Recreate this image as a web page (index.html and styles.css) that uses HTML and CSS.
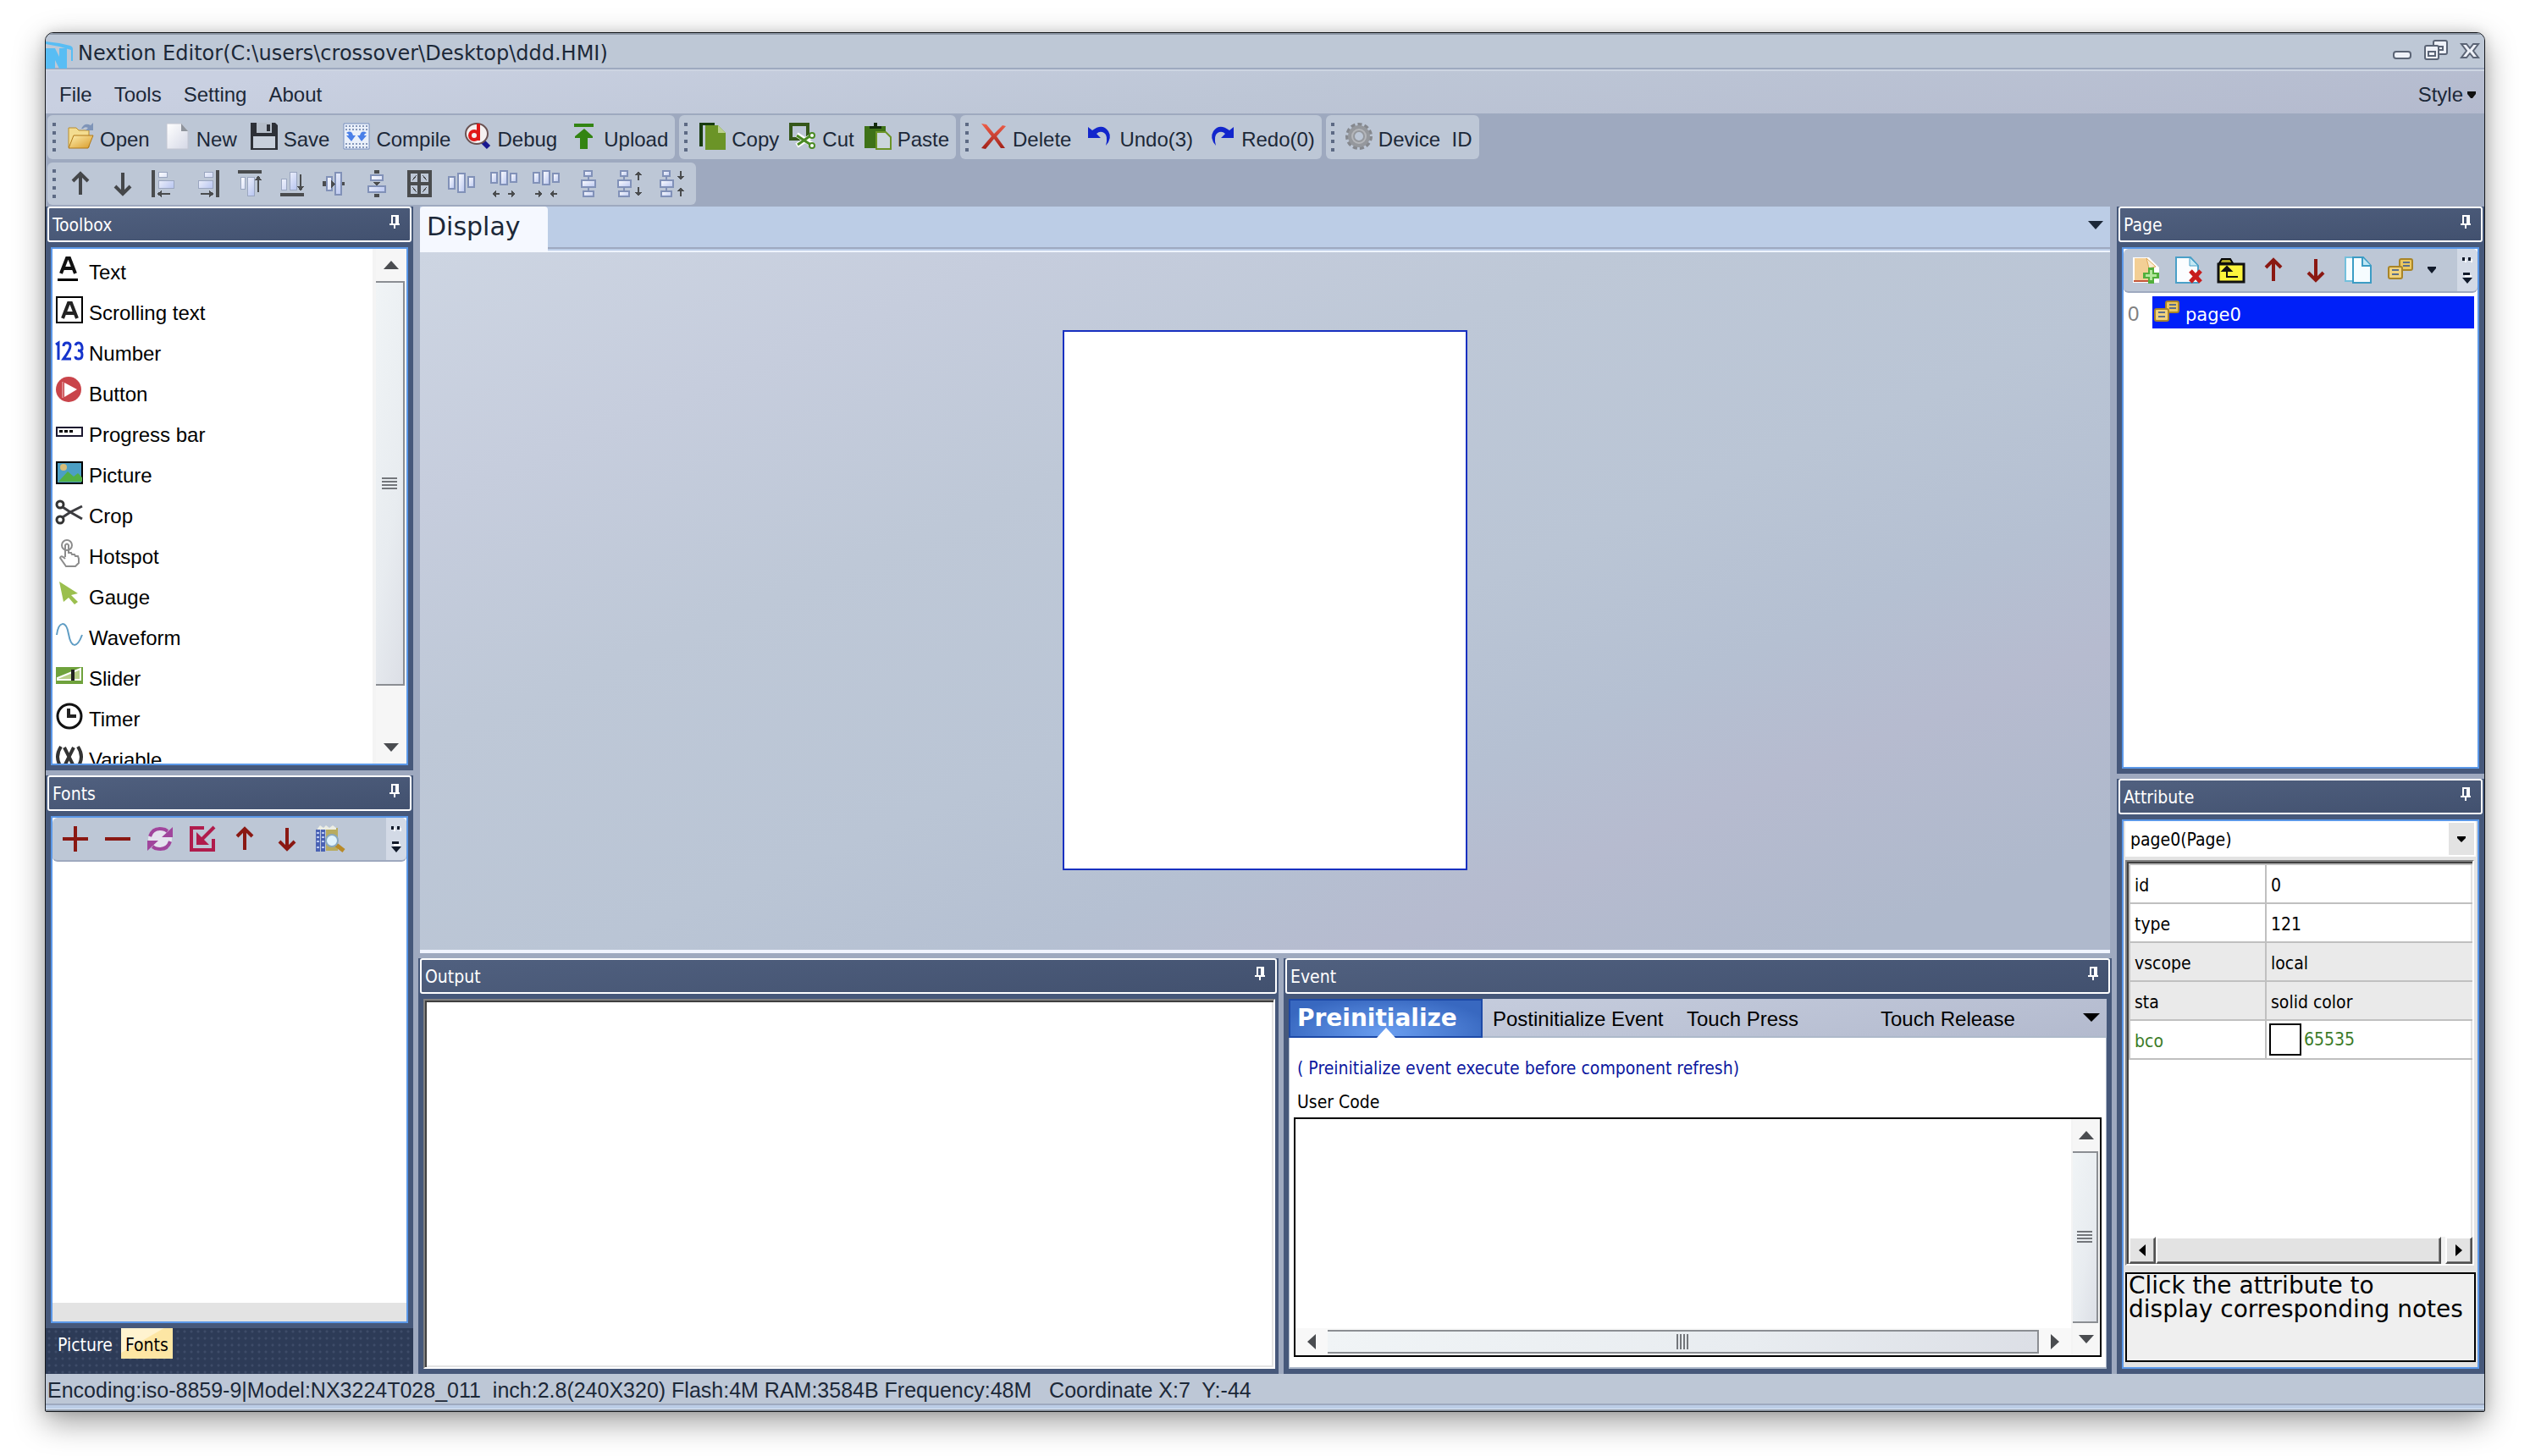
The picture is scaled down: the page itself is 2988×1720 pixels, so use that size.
FILE: index.html
```html
<!DOCTYPE html>
<html lang="en">
<head>
<meta charset="utf-8">
<title>Nextion Editor</title>
<link rel="stylesheet" href="styles.css">
</head>
<body>
<svg class="sprite" aria-hidden="true">
  <defs>
    <linearGradient id="gFolder" x1="0" y1="0" x2="1" y2="1"><stop offset="0" stop-color="#fff0b0"/><stop offset="1" stop-color="#d89a28"/></linearGradient>
    <linearGradient id="gPaper" x1="0" y1="0" x2="1" y2="1"><stop offset="0" stop-color="#fff"/><stop offset="1" stop-color="#d5d8e6"/></linearGradient>
    <linearGradient id="gBar" x1="0" y1="0" x2="1" y2="1"><stop offset="0" stop-color="#fff"/><stop offset="1" stop-color="#b9c6f0"/></linearGradient>
    <linearGradient id="gRed" x1="0" y1="0" x2="0" y2="1"><stop offset="0" stop-color="#f0604a"/><stop offset="1" stop-color="#a02018"/></linearGradient>
  </defs>
  <symbol id="pin" viewBox="0 0 12 16"><path d="M2 0h9v10h1v2H7v4H5v-4H0v-2h2zM4 2v8h3V2z" fill="#fff" fill-rule="evenodd"/></symbol>
  <symbol id="up" viewBox="0 0 32 32"><path d="M16 29V5M7 13l9-9 9 9" fill="none" stroke="currentColor" stroke-width="4"/></symbol>
  <symbol id="down" viewBox="0 0 32 32"><path d="M16 3v24M7 19l9 9 9-9" fill="none" stroke="currentColor" stroke-width="4"/></symbol>
  <symbol id="cards" viewBox="0 0 32 32"><g stroke="#a88428" stroke-width="2"><rect x="15" y="3" width="15" height="13" rx="2" fill="#ecc860"/><rect x="2" y="12" width="16" height="14" rx="2" fill="#f0d27c"/></g><path d="M6 16h8M6 21h8M19 7h8M19 11h8" stroke="#5c6f8c" stroke-width="2"/></symbol>
  <symbol id="overflow" viewBox="0 0 14 32"><path d="M1 1h3v4H1zM8 1h3v4H8zM2 19h8v3H2z" fill="#111a2a"/><path d="M1 25h12l-6 7z" fill="#111a2a"/><path d="M4 3h2v4H4zM11 3h2v4h-2zM4 22h8v2H4z" fill="#fff"/></symbol>
  <symbol id="vh" viewBox="0 0 32 32"><g fill="url(#gBar)" stroke="#8191b8" stroke-width="2"><rect x="1" y="8" width="7" height="14"/><rect x="12" y="4" width="8" height="22"/><rect x="24" y="8" width="7" height="12"/></g></symbol>
  <symbol id="vhs" viewBox="0 0 32 32"><g fill="url(#gBar)" stroke="#8191b8" stroke-width="2"><rect x="1" y="3" width="7" height="12"/><rect x="12" y="1" width="8" height="16"/><rect x="24" y="4" width="7" height="10"/></g></symbol>
  <symbol id="vv" viewBox="0 0 32 32"><path d="M16 0v32" stroke="#8191b8" stroke-width="2"/><g fill="url(#gBar)" stroke="#8191b8" stroke-width="2"><rect x="11" y="1" width="9" height="6"/><rect x="8" y="12" width="16" height="8"/><rect x="10" y="25" width="12" height="6"/></g></symbol>
  <symbol id="vvs" viewBox="0 0 32 32"><path d="M8 0v32" stroke="#8191b8" stroke-width="2"/><g fill="url(#gBar)" stroke="#8191b8" stroke-width="2"><rect x="4" y="1" width="8" height="6"/><rect x="1" y="12" width="15" height="8"/><rect x="2" y="25" width="12" height="6"/></g></symbol>
</svg>

<main class="window">
  <header class="titlebar">
    <svg class="ico" viewBox="0 0 32 32"><path d="M0 0l16 2 13 3q3 1 3 4v14h-2V10l-14-4L0 3z" fill="#58bdf4"/><path d="M0 8h11l5 10V8h9v24h-9l-5-10v10H0z" fill="#58bdf4"/></svg>
    <h1>Nextion Editor(C:\users\crossover\Desktop\ddd.HMI)</h1>
    <div class="winctl">
      <button aria-label="Minimize"><svg width="24" height="30" viewBox="0 0 24 30"><rect x="2" y="17" width="20" height="8" rx="3" fill="#eef1f8" stroke="#5b6475" stroke-width="2"/></svg></button>
      <button aria-label="Restore"><svg width="30" height="30" viewBox="0 0 30 30"><g fill="#eef1f8" stroke="#5b6475" stroke-width="2"><rect x="12" y="4" width="16" height="16" rx="2"/><rect x="18" y="11" width="5" height="4"/><rect x="2" y="10" width="16" height="16" rx="2"/><rect x="6" y="17" width="8" height="5"/></g></svg></button>
      <button aria-label="Close"><svg width="24" height="30" viewBox="0 0 24 30"><path d="M2 8h6l4 5 4-5h6l-6 8 6 8h-6l-4-5-4 5H2l6-8z" fill="#eef1f8" stroke="#5b6475" stroke-width="2"/></svg></button>
    </div>
  </header>

  <nav class="menubar">
    <button>File</button><button>Tools</button><button>Setting</button><button>About</button>
    <button class="style">Style<svg width="10" height="8" viewBox="0 0 10 8"><path d="M0 0h10v3L6 8H4L0 3z" fill="#111"/></svg></button>
  </nav>

  <div class="toolbars">
    <div class="row">
      <div class="group">
        <i class="grip"></i>
        <button><svg class="ico" viewBox="0 0 32 32"><path d="M2 6h9l3 3h12v20H2z" fill="#f3dc90" stroke="#b98c2c"/><path d="M8 15h23l-6 15H2z" fill="url(#gFolder)" stroke="#b07818"/><path d="M17 7q4-8 11-4l3-3v9h-9l3-3q-4-2-6 1z" fill="#7e94b8"/></svg>Open</button>
        <button><svg class="ico" viewBox="0 0 32 32"><path d="M4 1h17l8 9v21H4z" fill="url(#gPaper)" stroke="#c3c6d2"/><path d="M21 1l8 9h-8z" fill="#8f949c"/></svg>New</button>
        <button><svg class="ico" viewBox="0 0 32 32"><path d="M0 0h29l3 3v29H0z" fill="#2e3138"/><path d="M7 0h18v12H7z" fill="#b7bfcb"/><path d="M19 2h4v8h-4z" fill="#2e3138"/><path d="M3 16h26v14H3z" fill="#c8d0dc"/></svg>Save</button>
        <button><svg class="ico" viewBox="0 0 32 32"><path d="M1 1h30v30H1z" fill="#eaf0fa" stroke="#7890c0"/><path d="M3 4h26M3 8h26M3 25h26M3 29h26" stroke="#8597ba" stroke-width="2" stroke-dasharray="2 2"/><path d="M4 12q6-4 8 3h3l-5 7-6-7h3q0-2-3-3zM28 12q-6-4-8 3h-3l5 7 6-7h-3q0-2 3-3z" fill="#4a7fe8"/></svg>Compile</button>
        <button><svg class="ico" viewBox="0 0 32 32"><path d="M20 20l9 9" stroke="#181890" stroke-width="6"/><ellipse cx="15" cy="13" rx="13" ry="12" fill="#f4f0f0" stroke="#6a5252" stroke-width="2"/><path d="M17 1v20" stroke="#e01818" stroke-width="4"/><ellipse cx="12" cy="15" rx="5" ry="5" fill="none" stroke="#e01818" stroke-width="4"/></svg>Debug</button>
        <button><svg class="ico" viewBox="0 0 32 32"><path d="M4 1h23v4H4zM16 7l10 9v2h-6v13h-9V18H5v-2z" fill="#338413"/></svg>Upload</button>
      </div>
      <div class="group tight">
        <i class="grip"></i>
        <button><svg class="ico" viewBox="0 0 32 32"><path d="M1 0h18v3H5v25H1z" fill="#183c10"/><path d="M8 3h15l9 9v20H8z" fill="#6b9427"/><path d="M23 3l9 9h-9z" fill="#b9d08c"/></svg>Copy</button>
        <button><svg class="ico" viewBox="0 0 32 32"><path d="M2 2h20v17H2z" fill="none" stroke="#35571a" stroke-width="4"/><path d="M9 14l20 13M9 27l20-13" stroke="#fff" stroke-width="6"/><path d="M9 15l18 12M10 26l17-12" stroke="#4a8a24" stroke-width="3"/><circle cx="27" cy="15" r="3" fill="#fff" stroke="#4a8a24" stroke-width="2"/><circle cx="27" cy="27" r="3" fill="#fff" stroke="#4a8a24" stroke-width="2"/></svg>Cut</button>
        <button><svg class="ico" viewBox="0 0 32 32"><path d="M0 4h25v26H0z" fill="#3e7218"/><path d="M6 7h14V4h-5V0h-4v4H6z" fill="#132c0c"/><path d="M14 11h11l6 6v14H14z" fill="#cbd5dd" stroke="#6b9427" stroke-width="2"/></svg>Paste</button>
      </div>
      <div class="group wide">
        <i class="grip"></i>
        <button><svg class="ico" viewBox="0 0 32 32"><path d="M2 1l6 1 9 11L27 3l4 1-11 12 10 14h-5l-8-11-10 12-5-1 12-14z" fill="url(#gRed)"/></svg>Delete</button>
        <button><svg class="ico" viewBox="0 0 32 32"><path d="M2 5l5 4q12-9 19 1 5 8-3 17 3-12-2-15-5-3-9 1l5 5H2z" fill="#1226cc"/></svg>Undo(3)</button>
        <button><svg class="ico" viewBox="0 0 32 32"><path d="M30 5l-5 4Q13 0 6 10q-5 8 3 17-3-12 2-15 5-3 9 1l-5 5h15z" fill="#1226cc"/></svg>Redo(0)</button>
      </div>
      <div class="group">
        <i class="grip"></i>
        <button><svg class="ico" viewBox="0 0 32 32"><circle cx="16" cy="16" r="14" fill="none" stroke="#85888e" stroke-width="4" stroke-dasharray="5 3"/><circle cx="16" cy="16" r="9" fill="none" stroke="#95989d" stroke-width="8"/><circle cx="16" cy="16" r="8" fill="none" stroke="#b4b6ba" stroke-width="2"/></svg><span class="pre">Device  ID</span></button>
      </div>
    </div>
    <div class="row">
      <div class="group icons">
        <i class="grip"></i>
        <button aria-label="Bring forward"><svg class="ico dark"><use href="#up"/></svg></button>
        <button aria-label="Send back"><svg class="ico dark"><use href="#down"/></svg></button>
        <button aria-label="Align left"><svg class="ico px" viewBox="0 0 32 32"><path d="M0 0h4v32H0z" fill="#4a4c4e"/><path d="M8 2h10v6H8zM8 12h18v9H8z" fill="url(#gBar)" stroke="#9aa6c0"/><path d="M6 28l6-4v3h10v2H12v3z" fill="#4a4c4e"/></svg></button>
        <button aria-label="Align right"><svg class="ico px" viewBox="0 0 32 32"><path d="M26 0h4v32h-4z" fill="#4a4c4e"/><path d="M12 2h10v6H12zM5 12h17v9H5z" fill="url(#gBar)" stroke="#9aa6c0"/><path d="M24 28l-6-4v3H8v2h10v3z" fill="#4a4c4e"/></svg></button>
        <button aria-label="Align top"><svg class="ico px" viewBox="0 0 32 32"><path d="M2 0h28v4H2z" fill="#4a4c4e"/><path d="M5 8h5v14H5zM13 8h8v22h-8z" fill="url(#gBar)" stroke="#9aa6c0"/><path d="M26 6l4 6h-3v14h-2V12h-3z" fill="#4a4c4e"/></svg></button>
        <button aria-label="Align bottom"><svg class="ico px" viewBox="0 0 32 32"><path d="M2 27h28v4H2z" fill="#4a4c4e"/><path d="M3 10h6v13H3zM13 2h8v21h-8z" fill="url(#gBar)" stroke="#9aa6c0"/><path d="M26 25l4-6h-3V5h-2v14h-3z" fill="#4a4c4e"/></svg></button>
        <button aria-label="Center vertically"><svg class="ico px" viewBox="0 0 32 32"><path d="M2 13h4v6H2zM24 14h4v4h-4z" fill="#4a4c4e"/><path d="M7 8h6v16H7zM17 3h7v26h-7z" fill="url(#gBar)" stroke="#8191b8" stroke-width="2"/><path d="M12 12l5 4-5 5z" fill="#4a4c4e"/></svg></button>
        <button aria-label="Center horizontally"><svg class="ico px" viewBox="0 0 32 32"><path d="M13 0h6v4h-6zM13 28h6v4h-6zM11 14h10l-5 4z" fill="#4a4c4e"/><path d="M9 6h14v6H9zM6 19h20v7H6z" fill="url(#gBar)" stroke="#8191b8" stroke-width="2"/></svg></button>
        <button aria-label="Same size"><svg class="ico px" viewBox="0 0 32 32"><path d="M4 2h25v28H4zM16 2v28M4 16h25" fill="none" stroke="#4a4c4e" stroke-width="4"/><path d="M8 12l5-6M20 6l5 6M8 20l5 6M20 26l5-6" stroke="#4a4c4e"/></svg></button>
        <button aria-label="Equal horizontal space"><svg class="ico px"><use href="#vh"/></svg></button>
        <button aria-label="Increase horizontal space"><svg class="ico px" viewBox="0 0 32 32"><use href="#vhs" width="32" height="32"/><path d="M2 28l5-4v3h4v2H7v3zM30 28l-5-4v3h-4v2h4v3z" fill="#4a4c4e"/></svg></button>
        <button aria-label="Decrease horizontal space"><svg class="ico px" viewBox="0 0 32 32"><use href="#vhs" width="32" height="32"/><path d="M12 28l-5-4v3H3v2h4v3zM20 28l5-4v3h4v2h-4v3z" fill="#4a4c4e"/></svg></button>
        <button aria-label="Equal vertical space"><svg class="ico px"><use href="#vv"/></svg></button>
        <button aria-label="Increase vertical space"><svg class="ico px" viewBox="0 0 32 32"><use href="#vvs" width="32" height="32"/><path d="M25 1l4 5h-3v6h-2V6h-3zM25 31l4-5h-3v-6h-2v6h-3z" fill="#4a4c4e"/></svg></button>
        <button aria-label="Decrease vertical space"><svg class="ico px" viewBox="0 0 32 32"><use href="#vvs" width="32" height="32"/><path d="M25 12l4-5h-3V1h-2v6h-3zM25 20l4 5h-3v6h-2v-6h-3z" fill="#4a4c4e"/></svg></button>
      </div>
    </div>
  </div>

  <div class="workspace">
    <aside class="col left">
      <section class="panel">
        <header class="head"><h2>Toolbox</h2><button aria-label="Pin Toolbox"><svg class="pinico"><use href="#pin"/></svg></button></header>
        <div class="body toolbox">
          <ul>
            <li><button><svg class="ico" viewBox="0 0 32 32"><path d="M6 21l7-18h3l7 18M9 15h11" fill="none" stroke="#111" stroke-width="4"/><path d="M2 27h24v3H2z"/></svg>Text</button></li>
            <li><button><svg class="ico" viewBox="0 0 32 32"><path d="M1 1h30v30H1z" fill="#fff" stroke="#000" stroke-width="2"/><path d="M8 26l7-18h3l7 18M11 20h11" fill="none" stroke="#222" stroke-width="4"/></svg>Scrolling text</button></li>
            <li><button><svg class="ico" viewBox="0 0 32 32"><path d="M0 9l3-2v20M9 11q0-4 4-4t4 4-8 15h9M23 10q1-3 4-3t4 5-5 4q5 0 5 5t-4 5-4-3" fill="none" stroke="#1534cc" stroke-width="3"/></svg>Number</button></li>
            <li><button><svg class="ico" viewBox="0 0 32 32"><circle cx="15" cy="14" r="15" fill="#c9444a"/><path d="M10 6l15 8-15 9z" fill="#fff"/><path d="M8 5v19" stroke="#f0c4c6" stroke-width="1"/></svg>Button</button></li>
            <li><button><svg class="ico" viewBox="0 0 32 32"><path d="M1 11h30v10H1z" fill="#fff" stroke="#1c1830" stroke-width="2"/><path d="M4 14h4v3H4zM10 14h4v3h-4zM16 14h4v3h-4z"/></svg>Progress bar</button></li>
            <li><button><svg class="ico" viewBox="0 0 32 32"><path d="M1 4h30v25H1z" fill="#4c9fc4" stroke="#000" stroke-width="2"/><circle cx="9" cy="10" r="4" fill="#d8bd78"/><path d="M3 27l11-12 7 6 5-4 5 5v5z" fill="#52b043"/></svg>Picture</button></li>
            <li><button><svg class="ico" viewBox="0 0 32 32"><circle cx="5" cy="6" r="4" fill="none" stroke="#333" stroke-width="3"/><circle cx="5" cy="24" r="4" fill="none" stroke="#333" stroke-width="3"/><path d="M8 9l9 6 14 8M8 21l9-6 14-7" fill="none" stroke="#3c3c40" stroke-width="3"/></svg>Crop</button></li>
            <li><button><svg class="ico" viewBox="0 0 32 32"><g fill="none" stroke="#8c8c8c" stroke-width="2"><circle cx="13" cy="6" r="6"/><path d="M11 20V6q2-3 4 0v9h3l1 2h3l1 2h3l1 3v5l-4 4H12l-7-10q1-4 6 1"/></g></svg>Hotspot</button></li>
            <li><button><svg class="ico" viewBox="0 0 32 32"><path d="M4 1l22 14-8 2 8 8-4 3-7-8-6 5z" fill="#9bbf4e"/></svg>Gauge</button></li>
            <li><button><svg class="ico" viewBox="0 0 32 32"><path d="M1 16C3 0 12-2 15 15s10 17 16 1" fill="none" stroke="#5f9dc4" stroke-width="2"/></svg>Waveform</button></li>
            <li><button><svg class="ico" viewBox="0 0 32 32"><path d="M0 6h32v20H0z" fill="#6fa23c"/><path d="M2 19L29 8v13H2z" fill="#b8cf88" stroke="#fff" stroke-width="2"/><path d="M18 9h4v13h-4z" fill="#222"/></svg>Slider</button></li>
            <li><button><svg class="ico" viewBox="0 0 32 32"><circle cx="16" cy="16" r="14" fill="#fff" stroke="#111" stroke-width="3"/><path d="M15 7v9h9" fill="none" stroke="#222" stroke-width="4"/></svg>Timer</button></li>
            <li><button><svg class="ico" viewBox="0 0 32 32"><path d="M6 4q-8 12 0 24M26 4q8 12 0 24M10 5l11 22M21 5L10 27" fill="none" stroke="#333" stroke-width="4"/></svg>Variable</button></li>
          </ul>
          <div class="vscroll"><i class="tri up"></i><div class="thumb"><i class="lines"></i></div><i class="tri dn"></i></div>
        </div>
      </section>
      <section class="panel fonts">
        <header class="head"><h2>Fonts</h2><button aria-label="Pin Fonts"><svg class="pinico"><use href="#pin"/></svg></button></header>
        <div class="body stack">
          <div class="minibar">
            <button aria-label="Add"><svg class="ico px red" viewBox="0 0 32 32"><path d="M14 1h4v13h13v4H18v13h-4V18H1v-4h13z" fill="currentColor"/></svg></button>
            <button aria-label="Remove"><svg class="ico px red" viewBox="0 0 32 32"><path d="M1 14h30v4H1z" fill="currentColor"/></svg></button>
            <button aria-label="Replace"><svg class="ico" viewBox="0 0 32 32"><circle cx="16" cy="16" r="14" fill="#e4e2ee"/><path d="M4 13Q8 1 22 5l3 2M28 19Q24 31 10 27l-3-2" fill="none" stroke="#a0459c" stroke-width="4"/><path d="M31 2v12H18zM1 30V18h13z" fill="#a0459c"/></svg></button>
            <button aria-label="Insert"><svg class="ico" viewBox="0 0 32 32"><path d="M18 3H3v26h26V16" fill="none" stroke="#b01c4c" stroke-width="4"/><path d="M30 2L15 17" stroke="#b01c4c" stroke-width="4"/><path d="M9 8v15h15z" fill="#b01c4c"/></svg></button>
            <button aria-label="Move up"><svg class="ico red"><use href="#up"/></svg></button>
            <button aria-label="Move down"><svg class="ico red"><use href="#down"/></svg></button>
            <button aria-label="Find font"><svg class="ico" viewBox="0 0 32 32"><path d="M0 5h5v26H0zM6 5h5v26H6z" fill="#4a62b4"/><path d="M1 9h3M1 14h3M1 19h3M1 26h3M7 9h3M7 14h3M7 19h3M7 26h3" stroke="#b8c8f0" stroke-width="2"/><path d="M12 3h14v27H12z" fill="#b8ac60"/><path d="M2 4l3-4 4 3 3-3 4 3 4-3 4 3v2H2z" fill="#eceee4"/><path d="M24 23l9 7" stroke="#b88a28" stroke-width="5"/><circle cx="19" cy="18" r="7" fill="#dff2fc" stroke="#88a8c0" stroke-width="2"/></svg></button>
            <button class="more" aria-label="More"><svg><use href="#overflow"/></svg></button>
          </div>
          <div class="fill"></div>
          <div class="strip"></div>
        </div>
        <div class="docktabs"><button>Picture</button><button class="on">Fonts</button></div>
      </section>
    </aside>

    <div class="col center">
      <section class="display">
        <div class="tabs"><button class="tab">Display</button><button class="drop" aria-label="Tabs"><svg width="18" height="10" viewBox="0 0 18 10"><path d="M0 0h18l-9 10z" fill="#1c2838"/></svg></button></div>
        <div class="canvas"><div class="page"></div></div>
      </section>
      <div class="bottom">
        <section class="panel">
          <header class="head"><h2>Output</h2><button aria-label="Pin Output"><svg class="pinico"><use href="#pin"/></svg></button></header>
          <textarea class="output" aria-label="Output" readonly></textarea>
        </section>
        <section class="panel">
          <header class="head"><h2>Event</h2><button aria-label="Pin Event"><svg class="pinico"><use href="#pin"/></svg></button></header>
          <div class="event">
            <div class="evtabs"><button class="on">Preinitialize</button><button>Postinitialize Event</button><button>Touch Press</button><button>Touch Release</button><button class="evmore" aria-label="More events"><svg width="20" height="10" viewBox="0 0 20 10"><path d="M0 0h20L10 10z"/></svg></button></div>
            <div class="evbody">
              <p>( Preinitialize event execute before component refresh)</p>
              <label for="code">User Code</label>
              <div class="codebox">
                <textarea id="code"></textarea>
                <div class="vscroll"><i class="tri up"></i><div class="thumb"><i class="lines"></i></div><i class="tri dn"></i></div>
                <div class="hscroll"><i class="tri lf"></i><div class="thumb"><i class="lines"></i></div><i class="tri rt"></i></div>
              </div>
            </div>
          </div>
        </section>
      </div>
    </div>

    <aside class="col right">
      <section class="panel">
        <header class="head"><h2>Page</h2><button aria-label="Pin Page"><svg class="pinico"><use href="#pin"/></svg></button></header>
        <div class="body stack">
          <div class="minibar">
            <button aria-label="Add page"><svg class="ico" viewBox="0 0 32 32"><path d="M0 1h19l12 12v18H0z" fill="#fff"/><path d="M2 2h14l8 9v17H2z" fill="#f3cf95"/><path d="M16 2l11 10-8 2z" fill="#f8ecd0" stroke="#e0a858"/><path d="M1 29h17" stroke="#c4583c" stroke-width="2"/><path d="M18 13h7v6h6v7h-6v6h-7v-6h-6v-7h6z" fill="#52b03c"/><path d="M20 16h3v12h-3zM15 21h13v3H15z" fill="#b4e89c"/></svg></button>
            <button aria-label="Delete page"><svg class="ico" viewBox="0 0 32 32"><path d="M1 1h17l9 10v20H1z" fill="#fbfdff" stroke="#4aa0c8" stroke-width="2"/><path d="M17 1l10 10H17z" fill="#c4e8f4" stroke="#4aa0c8"/><path d="M18 17l12 13M30 17L18 30" stroke="#c81c1c" stroke-width="5"/></svg></button>
            <button aria-label="Insert page"><svg class="ico" viewBox="0 0 32 32"><path d="M2 8l3-5h10l3 5z" fill="#b0a828" stroke="#000" stroke-width="2"/><path d="M1 9h30v21H1z" fill="#fcf43c" stroke="#111" stroke-width="3"/><path d="M11 16v8h13M6 17l5-5 5 5z" fill="none" stroke="#111" stroke-width="2"/><path d="M6 17l5-5 5 5z" fill="#111"/></svg></button>
            <button aria-label="Move up"><svg class="ico red"><use href="#up"/></svg></button>
            <button aria-label="Move down"><svg class="ico red"><use href="#down"/></svg></button>
            <button aria-label="Copy page"><svg class="ico" viewBox="0 0 32 32"><g fill="#f6fcff" stroke="#3c9cc4" stroke-width="2"><path d="M1 1h13v28H1z" stroke="#74c0dc"/><path d="M10 1h12l9 10v20H10z"/><path d="M21 1v10h10" fill="#bfe6f4"/></g></svg></button>
            <button aria-label="Page type"><svg class="ico"><use href="#cards"/></svg></button>
            <svg class="caret" width="10" height="8" viewBox="0 0 10 8"><path d="M0 0h10v2L5 8 0 2z" fill="#111a2a"/></svg>
            <button class="more" aria-label="More"><svg><use href="#overflow"/></svg></button>
          </div>
          <ol class="pages"><li><span class="num">0</span><button class="sel"><svg class="ico"><use href="#cards"/></svg><span>page0</span></button></li></ol>
        </div>
      </section>
      <section class="panel">
        <header class="head"><h2>Attribute</h2><button aria-label="Pin Attribute"><svg class="pinico"><use href="#pin"/></svg></button></header>
        <div class="body attr">
          <select aria-label="Component"><option>page0(Page)</option></select>
          <div class="grid">
            <table>
              <tr><th>id</th><td>0</td></tr>
              <tr><th>type</th><td>121</td></tr>
              <tr class="alt"><th>vscope</th><td>local</td></tr>
              <tr class="alt"><th>sta</th><td>solid color</td></tr>
              <tr class="green"><th>bco</th><td class="swcell"><span class="cell"><i class="swatch"></i>65535</span></td></tr>
            </table>
            <div class="classic"><button aria-label="Scroll left"><svg width="8" height="14" viewBox="0 0 8 14"><path d="M8 0v14L0 7z"/></svg></button><div class="cthumb"></div><button aria-label="Scroll right"><svg width="8" height="14" viewBox="0 0 8 14"><path d="M0 0v14l8-7z"/></svg></button></div>
          </div>
          <p class="note">Click the attribute to<br>display corresponding notes</p>
        </div>
      </section>
    </aside>
  </div>

  <footer class="status"><span class="pre">Encoding:iso-8859-9|Model:NX3224T028_011  inch:2.8(240X320) Flash:4M RAM:3584B Frequency:48M   Coordinate X:7  Y:-44</span></footer>
</main>
</body>
</html>
```
FILE: styles.css
```css
:root {
  --ui: "Liberation Sans", Arial, sans-serif;
  --cond: "DejaVu Sans Condensed", "DejaVu Sans", sans-serif;
  --wide: "DejaVu Sans", Verdana, sans-serif;
  --face: #bdc7d6;
  --gutter: #9ea9bf;
  --navy: #46587a;
  --ink: #1c2838;
}
* { box-sizing: border-box; }
html, body { height: 100%; }
body {
  margin: 0;
  padding: 38px 53px 52px;
  background: #fff;
  font: 24px/28px var(--ui);
  color: var(--ink);
  overflow: hidden;
}
button, textarea, select { font: inherit; color: inherit; }
button { border: 0; background: none; padding: 0; display: flex; align-items: center; white-space: nowrap; }
h1, h2, p, ul, ol { margin: 0; padding: 0; font-weight: normal; list-style: none; }
svg { display: block; flex: none; }
.sprite { position: absolute; width: 0; height: 0; }
.ico { width: 32px; height: 32px; overflow: visible; }
.px { shape-rendering: crispEdges; }
.dark { color: #45474a; }
.red { color: #8a1812; }
.pre { white-space: pre; }

.window {
  height: 100%;
  display: flex;
  flex-direction: column;
  border: 1px solid #15181c;
  border-radius: 10px 10px 2px 2px;
  background: var(--gutter);
  overflow: hidden;
  box-shadow: 0 12px 36px rgba(0, 0, 0, .38), 0 0 14px rgba(0, 0, 0, .12);
}

.titlebar { height: 43px; display: flex; align-items: center; background: #bec8d6; border-top: 2px solid #8b95a3; border-bottom: 2px solid var(--gutter); padding-top: 8px; }
.titlebar h1 { font: 24px/28px var(--wide); margin-left: 6px; flex: 1; padding-bottom: 4px; }
.winctl { display: flex; gap: 13px; padding: 0 5px 12px 0; }

.menubar { height: 52px; display: flex; align-items: center; gap: 26px; padding: 6px 10px 0 16px; background: linear-gradient(173deg, #c9d0e1 10%, #bdc6d6 50%, #b4bace); border-top: 2px solid #cdd5e2; }
.style { margin-left: auto; gap: 5px; }

.toolbars { display: flex; flex-direction: column; gap: 4px; padding: 2px 0 2px 2px; }
.row { display: flex; gap: 5px; }
.group { height: 52px; display: flex; align-items: center; gap: 16px; padding: 0 8px 0 6px; background: var(--face); border-radius: 6px; }
.tight { gap: 12px; }
.wide { gap: 18px; }
.icons { gap: 18px; height: 50px; padding-right: 11px; }
.group button { gap: 7px; padding-top: 6px; }
.group button .ico { margin-bottom: 8px; }
.icons button { padding: 0; }
.icons button .ico { margin: 0; }
.grip { width: 4px; height: 34px; margin-right: -3px; background: repeating-linear-gradient(#5d6a84 0 4px, transparent 4px 10px); }
.tight .grip { margin-right: 1px; }
.wide .grip, .icons .grip { margin-right: -5px; }

.workspace { flex: 1; min-height: 0; display: grid; grid-template-columns: 434px 1fr 434px; gap: 6px; }
.col { display: grid; gap: 6px; min-height: 0; min-width: 0; }
.left { grid-template-rows: 666fr 706fr; }
.center { grid-template-rows: 881fr 491fr; }
.right { grid-template-rows: 670fr 702fr; }
.panel { display: flex; flex-direction: column; min-height: 0; min-width: 0; padding-bottom: 6px; background: var(--navy); }
.head { height: 42px; flex: none; display: flex; align-items: center; justify-content: space-between; margin: 0 2px 6px; padding: 2px 12px 0 4px; border: 2px solid #fff; border-radius: 3px; background: linear-gradient(175deg, #50607f, #42516f); color: #fff; }
.head h2 { font: 21px/26px var(--cond); }
.head button { padding-bottom: 8px; }
.pinico { width: 12px; height: 16px; }
.body { flex: 1; min-height: 0; margin: 0 6px; border: 2px solid #5b98e8; background: #fff; color: #000; }
.stack { display: flex; flex-direction: column; }

.toolbox { display: flex; overflow: hidden; }
.toolbox ul { flex: 1; padding: 4px 0 0 4px; overflow: hidden; }
.toolbox li { height: 48px; }
.toolbox li button { height: 48px; gap: 7px; width: 100%; }
.toolbox .ico { margin-bottom: 8px; }

.vscroll { width: 40px; display: flex; flex-direction: column; align-items: center; background: #f6f6f6; border-left: 4px solid #f4f4f4; }
.thumb { flex: 1; display: flex; align-items: center; justify-content: center; background: linear-gradient(100deg, #f0f4f6, #e8ecf0 60%, #dcdfe6); }
.vscroll .thumb { align-self: stretch; border: solid #8b8e93; border-width: 2px 2px 2px 0; margin-right: 2px; }
.vscroll .lines { width: 18px; height: 14px; background: repeating-linear-gradient(#73767b 0 2px, transparent 2px 4px); }
.tri { width: 0; height: 0; border: 9px solid transparent; }
.tri.up { border-top: 0; border-bottom: 10px solid #4a4c50; margin: 14px 0; }
.tri.dn { border-bottom: 0; border-top: 10px solid #4a4c50; margin: 68px 0 14px; }
.tri.lf { border-left: 0; border-right: 10px solid #4a4c50; margin: 0 14px; }
.tri.rt { border-right: 0; border-left: 10px solid #4a4c50; margin: 0 14px; }

.minibar { height: 52px; flex: none; display: flex; align-items: center; gap: 18px; padding-left: 11px; background: var(--face); border-bottom: 2px solid var(--gutter); border-radius: 6px; }
.more { margin-left: auto; width: 24px; height: 50px; justify-content: center; background: #d3dae6; border-radius: 0 6px 6px 0; }
.more svg { width: 14px; height: 32px; }
.caret { margin-left: -2px; }
.fill { flex: 1; }
.strip { height: 22px; background: #e3e3e3; }
.fonts { padding-bottom: 0; }
.docktabs { height: 54px; flex: none; display: flex; align-items: flex-start; gap: 10px; margin-top: 6px; padding-left: 14px; background: #2d3b57 radial-gradient(circle, #3e4c69 1px, transparent 2px) 0 0 / 8px 8px; color: #fff; font: 21px/36px var(--cond); }
.docktabs button { height: 36px; padding-top: 4px; }
.docktabs .on { padding: 4px 5px 0; background: linear-gradient(150deg, #fff3cf 40%, #fde6a4 42%); color: #000; }

.display { display: flex; flex-direction: column; margin: 0 2px; min-height: 0; border-bottom: 4px solid #f0f4ff; }
.tabs { height: 54px; flex: none; display: flex; justify-content: space-between; background: linear-gradient(#bccde6 48px, var(--gutter) 48px 50px, #bccde6 50px); border-bottom: 2px solid #eef4ff; }
.tab { width: 151px; padding: 0 8px 6px; background: #f5f8ff; border-radius: 4px 4px 0 0; font: 30px/40px var(--wide); margin-bottom: -2px; }
.drop { padding: 0 8px 8px 0; }
.canvas { flex: 1; display: grid; justify-items: center; align-items: start; padding-top: 92px; background: linear-gradient(to bottom right, #cdd5e2 0, #c6cddd 18%, #bec8d7 35%, #bac5d5 55%, #b5c0d2 68%, #b6bbcf 78%, #afb9cc 92%); }
.page { width: 478px; height: 638px; background: #fff; border: 2px solid #1830c0; }

.bottom { display: grid; grid-template-columns: 1016fr 978fr; gap: 6px; min-height: 0; }
.output { flex: 1; margin: 0 4px 0 6px; border: 2px solid #808080; border-color: #808080 #fff #fff #808080; box-shadow: inset 2px 2px #404040, inset -2px -2px #e3e3e3; background: #fff; resize: none; outline: 0; }
.event { flex: 1; display: flex; flex-direction: column; min-height: 0; margin: 0 6px; background: #fff; color: #000; }
.evtabs { height: 46px; flex: none; display: flex; background: linear-gradient(170deg, #c9d0e0, #b3bace); border-bottom: 2px solid #adb9ca; }
.evtabs button { width: 229px; padding: 4px 0 0 12px; height: 44px; }
.evtabs .on { position: relative; height: 46px; padding: 0 0 0 8px; border: 2px solid #1d4aa8; background: radial-gradient(ellipse at 50% 90%, #6a9ef0, #3868c0 80%); color: #fff; font: bold 28px/40px var(--wide); }
.evtabs .on::after { content: ""; position: absolute; left: 50%; bottom: -2px; margin-left: -11px; border: 11px solid transparent; border-top: 0; border-bottom: 12px solid #fff; }
.evtabs .evmore { margin-left: auto; width: 28px; padding: 0; }
.evbody { flex: 1; display: flex; flex-direction: column; min-height: 0; padding: 20px 5px 12px; border: solid #adb9ca; border-width: 0 1px 2px; font: 21px/32px var(--cond); }
.evbody p { color: #0c18a0; padding-left: 4px; }
.evbody label { padding: 8px 0 2px 4px; }
.codebox { flex: 1; min-height: 0; display: grid; grid-template: 1fr 32px / 1fr 34px; border: 2px solid #000; background: #f8f8f8; }
.codebox textarea { border: 0; resize: none; outline: 0; background: #fff; min-height: 0; }
.codebox .vscroll { width: 34px; grid-column: 2; grid-row: 1 / 3; border-left-width: 2px; }
.codebox .tri.dn { margin: 14px 0; }
.hscroll { display: flex; align-items: center; padding: 2px 0; }
.hscroll .thumb { align-self: stretch; border: solid #8b8e93; border-width: 2px 2px 2px 0; }
.hscroll .lines { width: 14px; height: 18px; background: repeating-linear-gradient(90deg, #73767b 0 2px, transparent 2px 4px); }

.pages { padding: 4px 4px 0 0; font: 21px/38px var(--wide); }
.pages li { display: flex; }
.num { width: 34px; padding: 2px 0 0 5px; color: #808080; font-family: var(--ui); font-size: 24px; }
.sel { flex: 1; height: 38px; gap: 6px; padding-left: 1px; background: #0020f8; color: #fff; }
.sel span { padding-top: 6px; }

.attr { display: flex; flex-direction: column; padding: 0 2px 6px; background: #e3e3e3; font: 21px/26px var(--cond); }
.attr select { appearance: none; height: 42px; flex: none; border: 0; border-radius: 0; padding: 2px 6px 0; color: #000; background: url("data:image/svg+xml,%3Csvg xmlns='http://www.w3.org/2000/svg' width='32' height='38'%3E%3Cpath d='M0 0h30v38H0z' fill='%23e3e3e3'/%3E%3Cpath d='M10 16h10v2l-5 5-5-5z'/%3E%3C/svg%3E") right 2px no-repeat #fff; }
.grid { flex: 1; min-height: 0; display: flex; flex-direction: column; justify-content: space-between; margin: 4px 2px 8px 0; border: 2px solid #fff; border-color: #808080 #fff #fff #808080; box-shadow: inset 2px 2px #404040, inset -2px 0 #e3e3e3; background: #fff; padding: 2px 0 0 2px; }
.attr table { border-collapse: collapse; width: 100%; }
.attr th, .attr td { height: 46px; padding: 4px 4px 0 5px; border: 2px solid #c0c0c0; text-align: left; font-weight: normal; }
.attr th { width: 161px; }
.attr td { border-right: 0; }
.alt { background: #eaeaea; }
.green { color: #3c7c28; }
.attr .swcell { padding: 0 3px; }
.cell { display: flex; align-items: center; gap: 3px; }
.swatch { width: 38px; height: 38px; border: 2px solid #000; background: #fff; }
.classic { display: flex; height: 32px; background: #f2f2f2; }
.classic button, .cthumb { border: 2px solid #fff; border-color: #fff #505050 #505050 #fff; background: #e3e3e3; box-shadow: inset -1px -1px #808080; }
.classic button { width: 32px; justify-content: center; }
.cthumb { flex: 1; margin-right: 5px; }
.note { height: 106px; flex: none; padding: 0 2px; border: 2px solid #000; background: #efefef; font: 28px/28px var(--wide); }

.status { height: 44px; flex: none; padding: 5px 2px 0; border-bottom: 2px solid #8b95a3; background: linear-gradient(var(--face) 35px, var(--gutter) 35px 37px, #bccde6 37px 41px, #dce7f6 41px); font-size: 25px; }
```
